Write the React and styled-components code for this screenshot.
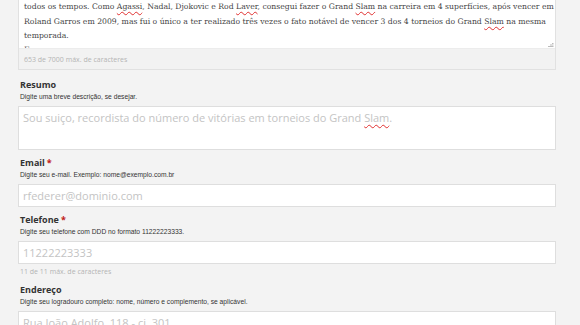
import React from "react";
import styled, { createGlobalStyle } from "styled-components";

const Global = createGlobalStyle`
  html, body { margin: 0; padding: 0; background: #f3f3f3; }
  body { font-family: "Open Sans", "Liberation Sans", sans-serif; overflow: hidden; }
  * { box-sizing: border-box; }
`;

const Page = styled.div`
  width: 538px;
  margin-left: 18px;
  display: flex;
  flex-direction: column;
`;

const BioBox = styled.div`
  border: 1px solid #e1e1e1;
  border-top: none;
  background: #f2f2f2;
  margin-bottom: 9px;
`;

const BioText = styled.div`
  position: relative;
  background: #fff;
  height: 49px;
  overflow: hidden;
  padding: 0 4px 0 5px;
  font-family: "DejaVu Serif", "Liberation Serif", serif;
  font-size: 7.7px;
  line-height: 14.6px;
  color: #444;
  white-space: nowrap;
  border-bottom: 1px solid #ececec;
`;

const Line = styled.div`
  margin-top: ${(p) => p.$mt || 0}px;
`;

const Squiggle = styled.span`
  text-decoration: underline wavy #e03030;
  text-decoration-thickness: 1px;
  text-underline-offset: 2px;
`;

const Handle = styled.svg`
  position: absolute;
  right: 1px;
  bottom: 1px;
`;

const Counter = styled.div`
  font-size: 7px;
  line-height: 10px;
  color: #b4b4b4;
  padding: ${(p) => (p.$boxed ? "6px 5px 4px" : "3px 0 0 2px")};
`;

const Group = styled.div`
  display: flex;
  flex-direction: column;
  margin-bottom: 7px;
`;

const Label = styled.div`
  font-weight: 700;
  font-size: 9px;
  line-height: 12px;
  color: #333;
  padding-left: 2px;
`;

const Req = styled.span`
  color: #c01818;
  margin-left: 2px;
`;

const Hint = styled.div`
  font-family: "Liberation Sans", Arial, sans-serif;
  font-size: 6.7px;
  line-height: 11px;
  color: #333;
  padding-left: 2px;
`;

const FakeArea = styled.div`
  margin-top: 4px;
  height: 44px;
  background: #fff;
  border: 1px solid #dedede;
  padding: 3px 4px;
  font-size: 11px;
  line-height: 15px;
  color: #c4c4c4;
`;

const Input = styled.input`
  margin-top: 4px;
  height: 23px;
  width: 100%;
  background: #fff;
  border: 1px solid #dedede;
  padding: 0 4px;
  font-family: "Open Sans", sans-serif;
  font-size: 11px;
  color: #333;
  outline: none;
  &::placeholder { color: #c4c4c4; }
`;

export default function App() {
  return (
    <>
      <Global />
      <Page>
        <BioBox>
          <BioText>
            <Line>
              todos os tempos. Como <Squiggle>Agassi</Squiggle>, Nadal, Djokovic e Rod{" "}
              <Squiggle>Laver</Squiggle>, consegui fazer o Grand <Squiggle>Slam</Squiggle> na
              carreira em 4 superfícies, após vencer em
            </Line>
            <Line>
              Roland Garros em 2009, mas fui o único a ter realizado três vezes o fato notável
              de vencer 3 dos 4 torneios do Grand <Squiggle>Slam</Squiggle> na mesma
            </Line>
            <Line>temporada.</Line>
            <Line $mt={-1}>F</Line>
            <Handle width="7" height="4" viewBox="0 0 7 4">
              <path d="M1 3.5 L6.5 3.5 M3 2 L6.5 2 M5 0.5 L6.5 0.5" stroke="#bbb" strokeWidth="1" />
            </Handle>
          </BioText>
          <Counter $boxed>653 de 7000 máx. de caracteres</Counter>
        </BioBox>

        <Group>
          <Label>Resumo</Label>
          <Hint>Digite uma breve descrição, se desejar.</Hint>
          <FakeArea>
            Sou suiço, recordista do número de vitórias em torneios do Grand{" "}
            <Squiggle>Slam</Squiggle>.
          </FakeArea>
        </Group>

        <Group>
          <Label>
            Email<Req>*</Req>
          </Label>
          <Hint>Digite seu e-mail. Exemplo: nome@exemplo.com.br</Hint>
          <Input placeholder="rfederer@dominio.com" />
        </Group>

        <Group>
          <Label>
            Telefone<Req>*</Req>
          </Label>
          <Hint>Digite seu telefone com DDD no formato 11222223333.</Hint>
          <Input placeholder="11222223333" />
          <Counter>11 de 11 máx. de caracteres</Counter>
        </Group>

        <Group>
          <Label>Endereço</Label>
          <Hint>Digite seu logradouro completo: nome, número e complemento, se aplicável.</Hint>
          <Input placeholder="Rua João Adolfo, 118 - cj. 301" />
        </Group>
      </Page>
    </>
  );
}
